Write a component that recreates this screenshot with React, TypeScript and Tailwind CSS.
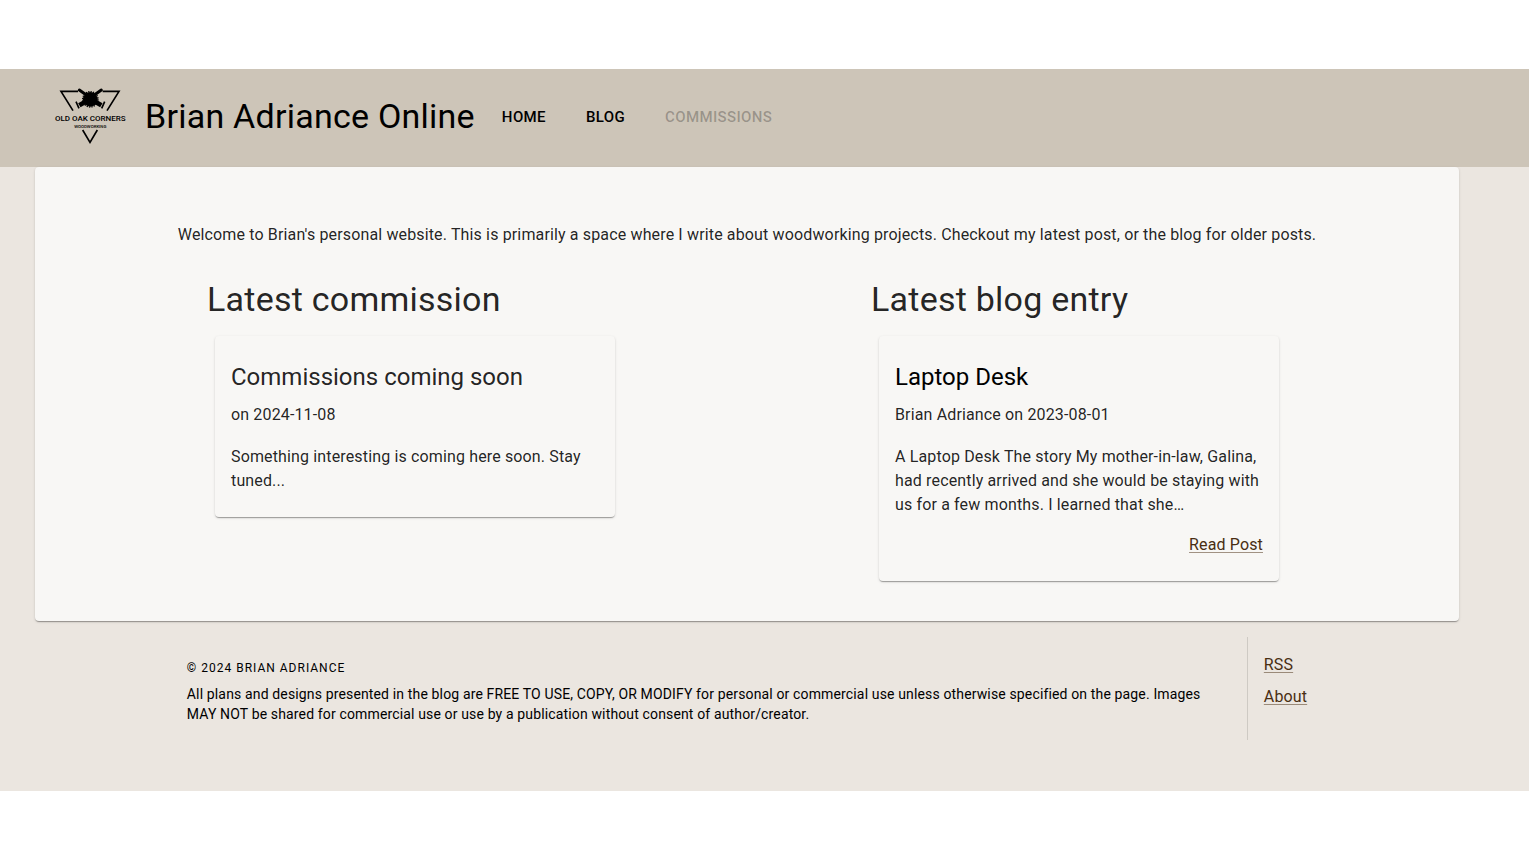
import type { ReactNode } from 'react';
import clsx from 'clsx';

const NAV_ITEMS = [
  { label: 'Home', disabled: false },
  { label: 'Blog', disabled: false },
  { label: 'Commissions', disabled: true },
];

const PAPER = 'rounded bg-[#f8f7f5] shadow-[0_2px_1px_-1px_rgba(0,0,0,0.2),0_1px_1px_0_rgba(0,0,0,0.14),0_1px_3px_0_rgba(0,0,0,0.12)]';

export default function App() {
  return (
    <div className="bg-white py-[69px] font-[Roboto,sans-serif] text-base tracking-[0.009em] text-black/87">
      <div className="bg-[#ebe6e0] pb-[51px]">
        <Header />
        <div className="mr-[70px] ml-[35px]">
          <main className={clsx(PAPER, 'px-12 pt-14 pb-10')}>
            <p className="text-center">
              Welcome to Brian's personal website. This is primarily a space where I write about woodworking projects.
              Checkout my latest post, or the blog for older posts.
            </p>
            <div className="mt-[31px] flex flex-wrap items-start justify-around">
              <Latest heading="Latest commission">
                <h3 className="text-2xl tracking-normal">Commissions coming soon</h3>
                <p className="mt-2.5">on 2024-11-08</p>
                <p className="mt-[18px]">Something interesting is coming here soon. Stay tuned...</p>
              </Latest>
              <Latest heading="Latest blog entry">
                <h3 className="text-2xl tracking-normal text-black">
                  <a href="#laptop-desk">Laptop Desk</a>
                </h3>
                <p className="mt-2.5">Brian Adriance on 2023-08-01</p>
                <p className="mt-[18px]">
                  A Laptop Desk The story My mother-in-law, Galina, had recently arrived and she would be staying with
                  us for a few months. I learned that she…
                </p>
                <p className="mt-4 text-right">
                  <TextLink href="#laptop-desk">Read Post</TextLink>
                </p>
              </Latest>
            </div>
          </main>
          <Footer />
        </div>
      </div>
    </div>
  );
}

function Header() {
  return (
    <header className="flex items-center bg-[#cdc5b8] pt-3 pb-4 pl-[50px]">
      <Logo />
      <h1 className="ml-[15px] text-[34px] leading-[42px] tracking-[0.007em] whitespace-nowrap text-black">
        <a href="#home">Brian Adriance Online</a>
      </h1>
      <nav className="ml-[7px] flex">
        {NAV_ITEMS.map(({ label, disabled }) => (
          <button
            key={label}
            type="button"
            disabled={disabled}
            className="mx-2 px-3 pt-2.5 pb-2 text-[15px] font-medium tracking-wide text-black uppercase disabled:text-black/26"
          >
            {label}
          </button>
        ))}
      </nav>
    </header>
  );
}

function Latest({ heading, children }: { heading: string; children: ReactNode }) {
  return (
    <section className="w-[416px]">
      <h2 className="text-[34px] leading-[42px] tracking-[0.007em]">{heading}</h2>
      <div className={clsx(PAPER, 'mx-2 mt-4 px-4 pt-[25px] pb-6')}>{children}</div>
    </section>
  );
}

function TextLink({ href, children }: { href: string; children: ReactNode }) {
  return (
    <a href={href} className="text-[#492e12] underline decoration-[#492e12]/50 decoration-1 underline-offset-2">
      {children}
    </a>
  );
}

function Footer() {
  return (
    <footer className="flex justify-center pt-4">
      <div className="max-w-[1060px] pt-[15px] pr-4 pb-4 text-black">
        <p className="text-xs leading-8 tracking-[1px] uppercase">© 2024 Brian Adriance</p>
        <p className="text-sm">
          All plans and designs presented in the blog are FREE TO USE, COPY, OR MODIFY for personal or commercial use
          unless otherwise specified on the page. Images MAY NOT be shared for commercial use or use by a publication
          without consent of author/creator.
        </p>
      </div>
      <ul className="space-y-2 border-l border-black/12 pt-4 pb-[31px] pl-4">
        <li>
          <TextLink href="#rss">RSS</TextLink>
        </li>
        <li>
          <TextLink href="#about">About</TextLink>
        </li>
      </ul>
    </footer>
  );
}

// Old Oak Corners badge: saw blade over two crossed chisels inside a broken triangle
function Logo() {
  return (
    <svg viewBox="0 3 240 210" className="h-[70px] w-20 shrink-0" role="img" aria-label="Old Oak Corners Woodworking">
      <g fill="none" stroke="#000" strokeWidth="5">
        <path d="M84 34H33L69 92" />
        <path d="M158 34h49l-36 58" />
        <path d="M98 150l22 37 22-37" />
      </g>
      <g fill="none" stroke="#000">
        <path d="M88 30l20 14M154 30l-20 14" strokeWidth="9" strokeLinecap="round" />
        <path d="M105 66L88 76M137 66l17 10" strokeWidth="14" />
        <path d="M78 65l9 20M164 65l-9 20" strokeWidth="5" />
      </g>
      <circle cx="121" cy="58" r="22" />
      <circle cx="121" cy="58" r="23" fill="none" stroke="#000" strokeWidth="4" strokeDasharray="4 3.22" />
      <text x="121" y="124" textAnchor="middle" className="font-[Roboto,sans-serif] text-[24px] font-medium tracking-normal">
        OLD OAK CORNERS
      </text>
      <text x="121" y="143" textAnchor="middle" className="font-[Roboto,sans-serif] text-[13px] font-medium tracking-normal">
        WOODWORKING
      </text>
    </svg>
  );
}
